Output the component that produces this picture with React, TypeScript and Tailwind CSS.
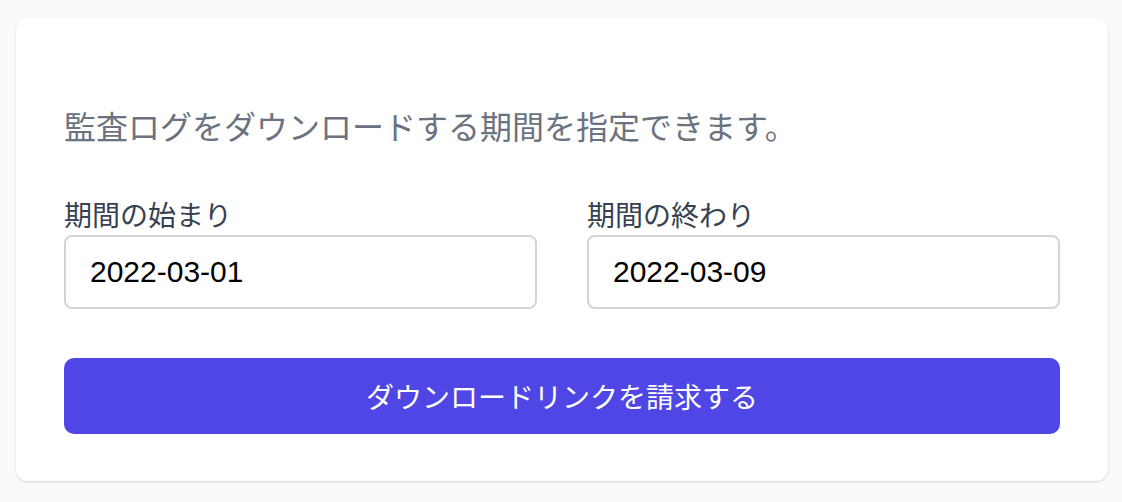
import { useState } from 'react';

const jpFont = "font-['Hiragino_Sans','Noto_Sans_CJK_JP',sans-serif]";

export default function App() {
  const [start, setStart] = useState('2022-03-01');
  const [end, setEnd] = useState('2022-03-09');

  return (
    <div className={`min-h-screen bg-[#f9fafb] pl-4 pr-[14px] pt-[18px] pb-5 ${jpFont}`}>
      <div className="rounded-xl bg-white px-12 pt-[83px] pb-[47px] shadow-[0_1px_3px_rgba(0,0,0,0.1),0_1px_2px_rgba(0,0,0,0.06)]">
        {/* Description */}
        <p className="text-[32px] leading-[48px] text-[#6b7280]">
          監査ログをダウンロードする期間を指定できます。
        </p>

        {/* Date range */}
        <div className="mt-[45px] grid grid-cols-2 gap-x-[50px]">
          <DateField label="期間の始まり" value={start} onChange={setStart} />
          <DateField label="期間の終わり" value={end} onChange={setEnd} />
        </div>

        <button className="mt-[49px] flex h-[76px] w-full items-center justify-center rounded-[10px] bg-[#4f46e5] text-[28px] text-white hover:bg-[#4338ca]">
          ダウンロードリンクを請求する
        </button>
      </div>
    </div>
  );
}

function DateField({
  label,
  value,
  onChange,
}: {
  label: string;
  value: string;
  onChange: (v: string) => void;
}) {
  return (
    <label className="flex flex-col">
      <span className="text-[28px] leading-[40px] text-[#374151]">{label}</span>
      <input
        type="text"
        value={value}
        onChange={(e) => onChange(e.target.value)}
        className="mt-px h-[74px] w-full rounded-lg border-2 border-[#d1d5db] bg-white px-6 font-['Liberation_Sans',sans-serif] text-[30px] text-black focus:outline-none"
      />
    </label>
  );
}
